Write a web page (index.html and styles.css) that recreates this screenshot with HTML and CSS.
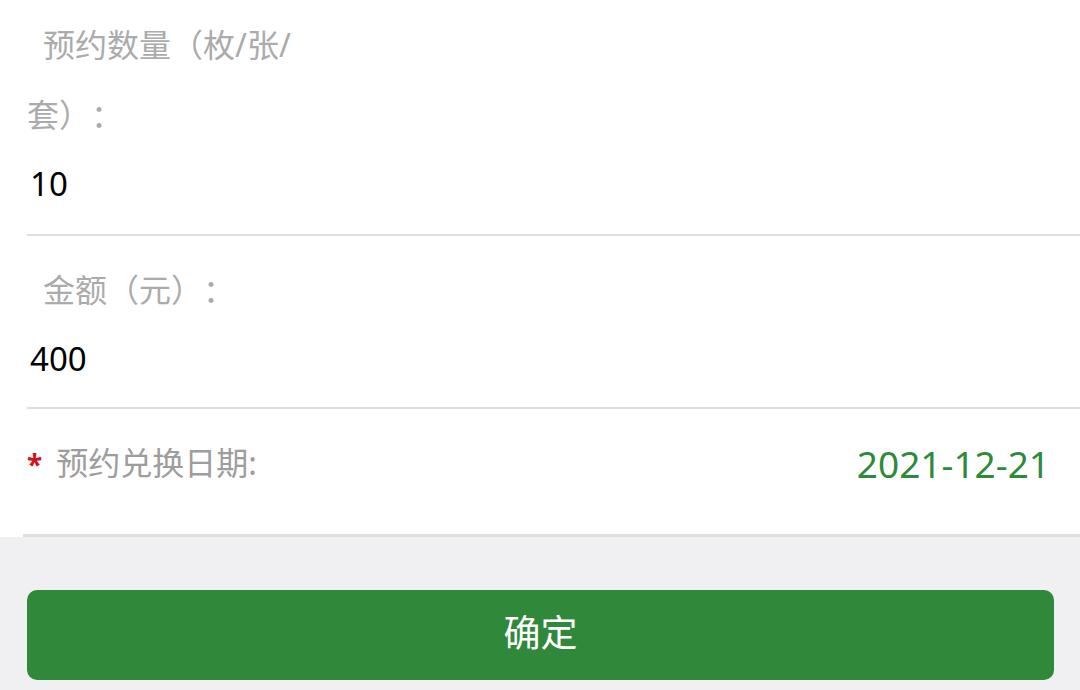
FILE: index.html
```html
<!DOCTYPE html>
<html lang="zh-CN">
<head>
    <meta charset="UTF-8">
    <meta name="viewport" content="width=device-width, initial-scale=1.0">
    <title>预约兑换</title>
    <link rel="stylesheet" href="styles.css">
</head>
<body>
    <div class="form">
        <div class="field field-first">
            <div class="field-label">预约数量（枚/张/套）：</div>
            <div class="field-value">10</div>
        </div>
        <div class="field">
            <div class="field-label">金额（元）：</div>
            <div class="field-value">400</div>
        </div>
        <div class="field field-date">
            <div class="date-label"><span class="req">*</span>预约兑换日期:</div>
            <div class="date-value">2021-12-21</div>
        </div>
    </div>
    <div class="footer">
        <button class="submit">确定</button>
    </div>
</body>
</html>
```

FILE: styles.css
```css
body {
    margin: 0;
    background-color: #fff;
    font-family: "Noto Sans", "Noto Sans CJK SC", sans-serif;
}
.form {
    background-color: #fff;
}
.field {
    margin-left: 27px;
    padding: 19px 0 14px;
    border-bottom: 2px solid #dedede;
}
.field-first {
    padding-top: 10px;
    padding-bottom: 16px;
}
.field-label {
    width: 290px;
    font-size: 32px;
    line-height: 70px;
    color: #ababab;
    text-indent: 16px;
    text-spacing-trim: space-all;
}
.field-value {
    padding-left: 3px;
    font-size: 33px;
    line-height: 68px;
    color: #000;
}
.field-date {
    display: flex;
    align-items: center;
    justify-content: space-between;
    padding-bottom: 35px;
    margin-left: 23px;
    padding-left: 4px;
    border-bottom: 3px solid #e0e0e0;
}
.date-label {
    font-size: 32px;
    line-height: 70px;
    color: #9d9d9d;
}
.req {
    color: #d0121b;
    font-size: 28px;
    font-weight: bold;
    margin-right: 14px;
}
.date-value {
    margin-right: 30px;
    font-size: 37px;
    color: #2e8a3b;
}
.footer {
    background-color: #f0f0f2;
    padding: 53px 26px 11px 27px;
    height: 200px;
}
.submit {
    display: block;
    width: 100%;
    height: 90px;
    padding: 0 0 8px;
    border: none;
    border-radius: 10px;
    background-color: #30883a;
    color: #fff;
    font-family: "Noto Sans CJK SC", sans-serif;
    font-size: 37px;
}
```
